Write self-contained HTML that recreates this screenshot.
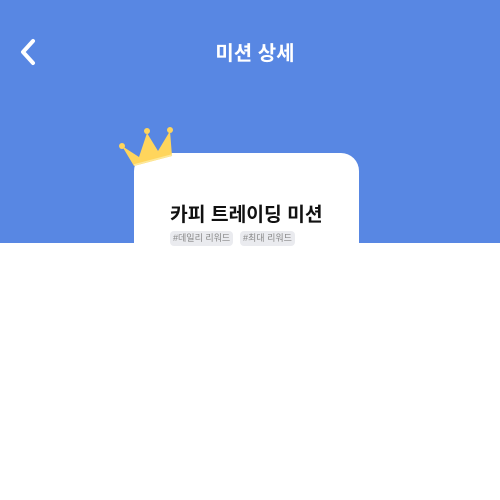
<!DOCTYPE html><html><head><meta charset="utf-8"><style>
body{margin:0;width:500px;height:500px;background:#fff;position:relative;overflow:hidden;font-family:"Liberation Sans","Noto Sans CJK KR",sans-serif}
.hdr{position:absolute;left:0;top:0;width:500px;height:243px;background:#5887e3}
.title{position:absolute;top:37px;left:5px;width:500px;text-align:center;color:#fff;font-weight:bold;font-size:20px}
.card{position:absolute;left:134px;top:153px;width:225px;height:200px;background:#fff;border-radius:18px}
.h{position:absolute;left:170px;top:199px;font-size:19.3px;font-weight:bold;color:#111}
.tag{position:absolute;top:231px;height:15px;line-height:15px;background:#eaebef;color:#888;font-size:9px;padding:0 3px;border-radius:4px}
</style></head><body>
<div class="hdr"></div>
<svg style="position:absolute;left:18px;top:38px" width="20" height="28"><path d="M15 3 L5 14 L15 25" stroke="#fff" stroke-width="4" fill="none" stroke-linecap="round" stroke-linejoin="round"/></svg>
<div class="title">미션 상세</div>
<div class="card"></div>
<svg style="position:absolute;left:115px;top:122px" width="65" height="50">
<path d="M7 24 L24 35 L32 11 L43 29 L55 9 L57 34 L19 44 Z" fill="#ffd55c"/>
<path d="M19 43 L57 33" stroke="#fde89a" stroke-width="1.5"/>
<circle cx="7" cy="24" r="3" fill="#ffd55c"/><circle cx="32" cy="9" r="3" fill="#ffd55c"/><circle cx="55" cy="8" r="3" fill="#ffd55c"/>
</svg>
<div class="h">카피 트레이딩 미션</div>
<div class="tag" style="left:170px">#데일리 리워드</div>
<div class="tag" style="left:240px">#최대 리워드</div>
</body></html>
